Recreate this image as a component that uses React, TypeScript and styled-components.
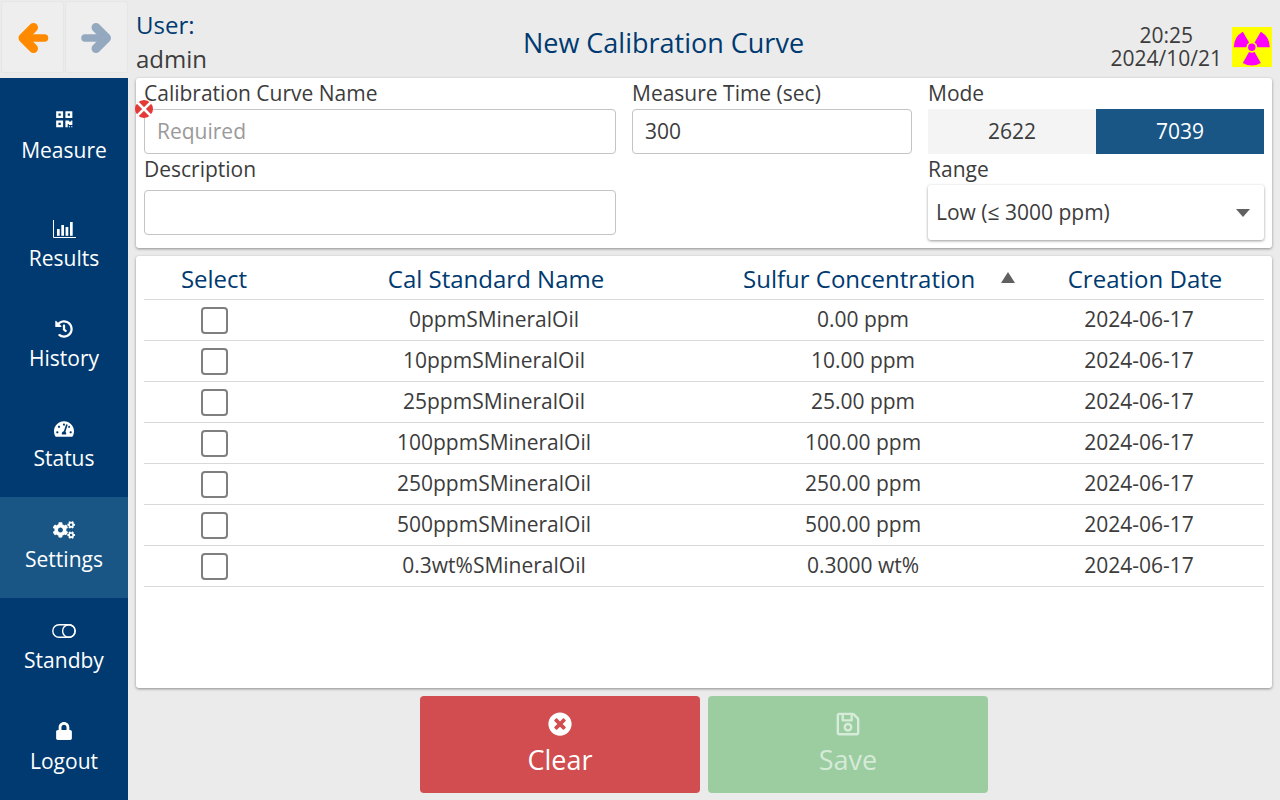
import React from "react";
import styled, { createGlobalStyle } from "styled-components";
import {
  FaQrcode,
  FaHistory,
  FaTachometerAlt,
  FaCogs,
  FaLock,
  FaTimesCircle,
  FaRegSave,
} from "react-icons/fa";

const Global = createGlobalStyle`
  html, body { margin: 0; padding: 0; }
  body { font-family: "Open Sans", "Liberation Sans", sans-serif; }
  * { box-sizing: border-box; }
`;

const Screen = styled.div`
  width: 1280px;
  height: 800px;
  overflow: hidden;
  background: #ebebeb;
  display: grid;
  grid-template-columns: 128px 1fr;
  grid-template-rows: 78px 722px;
  font-size: 21px;
  color: #3c3c3c;
`;

const NavButtons = styled.div`
  display: flex;
  gap: 1px;
  padding: 1px 0 5px 1px;
`;

const NavButton = styled.div`
  flex: 1 0 62px;
  display: flex;
  align-items: center;
  justify-content: center;
  background: #eeeeee;
  border: 1px solid #e6e6e6;
  border-radius: 3px;
`;

const Arrow = styled.svg<{ $color: string }>`
  width: 32px;
  height: 32px;
  display: block;
  fill: none;
  stroke: ${(p) => p.$color};
  stroke-linecap: round;
  stroke-linejoin: round;
`;

const Header = styled.header`
  display: grid;
  grid-template-columns: 1fr auto auto;
  align-items: center;
  padding: 0 8px;
  position: relative;
`;

const UserBlock = styled.div`
  display: flex;
  flex-direction: column;
  font-size: 24px;
  line-height: 34px;
  height: 78px;
  padding-top: 8px;
`;

const UserLabel = styled.span`
  color: #003a70;
`;

const Title = styled.h1`
  position: absolute;
  left: 0;
  width: 1071px;
  top: 24px;
  margin: 0;
  text-align: center;
  font-size: 27px;
  line-height: 38px;
  font-weight: 400;
  color: #003a70;
`;

const Clock = styled.div`
  text-align: center;
  line-height: 23px;
  margin-right: 10px;
  padding-top: 16px;
`;

const Hazard = styled.svg`
  width: 40px;
  height: 40px;
  margin-top: 16px;
  display: block;
`;

const Sidebar = styled.nav`
  background: #003a70;
  display: flex;
  flex-direction: column;
`;

const SideItem = styled.div<{ $active?: boolean; $height?: number; $pad?: number }>`
  height: ${(p) => p.$height ?? 100}px;
  flex: none;
  display: flex;
  flex-direction: column;
  align-items: center;
  justify-content: flex-end;
  padding-bottom: ${(p) => p.$pad ?? 24}px;
  background: ${(p) => (p.$active ? "#195686" : "transparent")};
  color: #fff;
`;

const SideIcon = styled.span<{ $size?: number; $gap?: number }>`
  height: 20px;
  font-size: ${(p) => p.$size ?? 18}px;
  line-height: 20px;
  display: flex;
  align-items: center;
  margin-bottom: ${(p) => p.$gap ?? 4}px;
`;

const SideLabel = styled.span`
  line-height: 30px;
`;

const Main = styled.main`
  padding: 0 8px 7px;
  display: flex;
  flex-direction: column;
  gap: 8px;
  min-height: 0;
`;

const Card = styled.section`
  background: #fff;
  border-radius: 3px;
  box-shadow: 0 1px 3px rgba(0, 0, 0, 0.4);
`;

const FormCard = styled(Card)`
  height: 170px;
  flex: none;
  padding: 0 8px;
  display: grid;
  grid-template-columns: 472px 280px 336px;
  column-gap: 16px;
  position: relative;
`;

const Column = styled.div`
  display: flex;
  flex-direction: column;
`;

const Label = styled.label`
  line-height: 30px;
  height: 31px;
  white-space: nowrap;
`;

const LowerLabel = styled(Label)`
  height: 36px;
  line-height: 30px;
`;

const TextInput = styled.div<{ $placeholder?: boolean }>`
  height: 45px;
  border: 1px solid #c4c4c4;
  border-radius: 4px;
  padding: 0 12px;
  line-height: 42px;
  color: ${(p) => (p.$placeholder ? "#9a9a9a" : "#3c3c3c")};
`;

const ErrorBadge = styled.svg`
  position: absolute;
  left: -1px;
  top: 22px;
  width: 18px;
  height: 18px;
  display: block;
`;

const Segments = styled.div`
  display: grid;
  grid-template-columns: 1fr 1fr;
  height: 45px;
`;

const Segment = styled.div<{ $on?: boolean }>`
  display: flex;
  align-items: center;
  justify-content: center;
  padding-bottom: 2px;
  background: ${(p) => (p.$on ? "#195686" : "#f4f4f4")};
  color: ${(p) => (p.$on ? "#fff" : "#3c3c3c")};
`;

const Select = styled.div`
  height: 55px;
  border-radius: 3px;
  box-shadow: 0 1px 3px rgba(0, 0, 0, 0.4);
  padding: 0 14px 2px 8px;
  display: flex;
  align-items: center;
  justify-content: space-between;
  background: #fff;
`;

const Caret = styled.svg`
  width: 14px;
  height: 8px;
  display: block;
  fill: #606060;
  margin-top: 2px;
`;

const TableCard = styled(Card)`
  flex: 1;
  padding: 0 8px;
`;

const Row = styled.div`
  display: grid;
  grid-template-columns: 141px 422px 319px 238px;
  height: 41px;
  align-items: center;
  border-bottom: 1px solid #d9d9d9;
  text-align: center;
`;

const HeadRow = styled(Row)`
  height: 44px;
  padding-top: 2px;
  font-size: 24px;
  color: #003a70;
`;

const Cell = styled.div<{ $shift?: number }>`
  white-space: nowrap;
  padding-right: ${(p) => p.$shift ?? 0}px;
`;

const TextCell = styled(Cell)`
  padding-bottom: 2px;
`;

const SortHead = styled.div`
  display: flex;
  align-items: center;
  gap: 26px;
  padding-left: 36px;
  white-space: nowrap;
`;

const Sort = styled.svg`
  width: 14px;
  height: 11px;
  display: block;
  fill: #606060;
  margin-top: -2px;
`;

const Check = styled.span`
  display: block;
  width: 27px;
  height: 27px;
  margin: 0 auto;
  border: 2px solid #7f7f7f;
  border-radius: 4px;
  background: #fff;
`;

const Actions = styled.div`
  display: flex;
  justify-content: center;
  gap: 8px;
  height: 97px;
  flex: none;
`;

const ActionButton = styled.button<{ $bg: string; $dim?: boolean }>`
  width: 280px;
  border: 0;
  border-radius: 4px;
  background: ${(p) => p.$bg};
  color: ${(p) => (p.$dim ? "rgba(255,255,255,0.6)" : "#fff")};
  font: inherit;
  font-size: 27px;
  display: flex;
  flex-direction: column;
  align-items: center;
  padding: 16px 0 0;
`;

const ActionIcon = styled.span<{ $size?: number }>`
  font-size: ${(p) => p.$size ?? 24}px;
  height: 24px;
  line-height: 24px;
  display: flex;
  align-items: center;
  margin-bottom: 5px;
`;

const StandbyIcon = () => (
  <svg width="24" height="14" viewBox="0 0 24 14" fill="none" stroke="#fff" strokeWidth="1.4">
    <rect x="0.8" y="0.8" width="22.4" height="12.4" rx="6.2" />
    <circle cx="16.8" cy="7" r="6.2" />
  </svg>
);

const ChartIcon = () => (
  <svg width="23" height="18" viewBox="0 0 23 18" fill="#fff">
    <path d="M.5 0V17.5H23" fill="none" stroke="#fff" strokeWidth="1" />
    <rect x="4" y="9" width="2.7" height="6.8" />
    <rect x="8.3" y="5" width="2.7" height="10.8" />
    <rect x="12.6" y="7" width="2.7" height="8.8" />
    <rect x="17" y="2" width="2.7" height="13.8" />
  </svg>
);

const rows = [
  ["0ppmSMineralOil", "0.00 ppm"],
  ["10ppmSMineralOil", "10.00 ppm"],
  ["25ppmSMineralOil", "25.00 ppm"],
  ["100ppmSMineralOil", "100.00 ppm"],
  ["250ppmSMineralOil", "250.00 ppm"],
  ["500ppmSMineralOil", "500.00 ppm"],
  ["0.3wt%SMineralOil", "0.3000 wt%"],
];

const blade = "M17.25 24.76 L11 35.59 A18 18 0 0 0 29 35.59 L22.75 24.76 A5.5 5.5 0 0 1 17.25 24.76 Z";

export default function App() {
  return (
    <Screen>
      <Global />
      <NavButtons>
        <NavButton>
          <Arrow $color="#ff8a00" viewBox="0 0 32 32">
            <path d="M6 17L16.5 6.5M6 17L16.5 27.5" strokeWidth="9" />
            <path d="M8 17H27.5" strokeWidth="7.5" />
          </Arrow>
        </NavButton>
        <NavButton>
          <Arrow $color="#94a9c0" viewBox="0 0 32 32">
            <path d="M25.5 17L15 6.5M25.5 17L15 27.5" strokeWidth="9" />
            <path d="M4 17H23" strokeWidth="7.5" />
          </Arrow>
        </NavButton>
      </NavButtons>
      <Header>
        <UserBlock>
          <UserLabel>User:</UserLabel>
          <span>admin</span>
        </UserBlock>
        <Title>New Calibration Curve</Title>
        <Clock>
          20:25
          <br />
          2024/10/21
        </Clock>
        <Hazard viewBox="0 0 40 40">
          <rect width="40" height="40" fill="#ffff00" />
          <g fill="#ff00ff" transform="translate(-0.2 0.3)">
            <path d={blade} />
            <path d={blade} transform="rotate(120 20 20)" />
            <path d={blade} transform="rotate(-120 20 20)" />
            <circle cx="20" cy="20" r="3.7" />
          </g>
        </Hazard>
      </Header>
      <Sidebar>
        <SideItem $height={119} $pad={32}>
          <SideIcon $size={18.5} $gap={6}><FaQrcode /></SideIcon>
          <SideLabel>Measure</SideLabel>
        </SideItem>
        <SideItem>
          <SideIcon><ChartIcon /></SideIcon>
          <SideLabel>Results</SideLabel>
        </SideItem>
        <SideItem>
          <SideIcon $size={18}><FaHistory /></SideIcon>
          <SideLabel>History</SideLabel>
        </SideItem>
        <SideItem>
          <SideIcon $size={20}><FaTachometerAlt /></SideIcon>
          <SideLabel>Status</SideLabel>
        </SideItem>
        <SideItem $active $height={101}>
          <SideIcon $size={22}><FaCogs /></SideIcon>
          <SideLabel>Settings</SideLabel>
        </SideItem>
        <SideItem $height={101}>
          <SideIcon><StandbyIcon /></SideIcon>
          <SideLabel>Standby</SideLabel>
        </SideItem>
        <SideItem $height={101} $pad={24}>
          <SideIcon $size={18} $gap={5}><FaLock /></SideIcon>
          <SideLabel>Logout</SideLabel>
        </SideItem>
      </Sidebar>
      <Main>
        <FormCard>
          <ErrorBadge viewBox="0 0 18 18">
            <circle cx="9" cy="9" r="9" fill="#e53935" />
            <path d="M3.5 3.5L14.5 14.5M14.5 3.5L3.5 14.5" stroke="#fff" strokeWidth="2.6" strokeLinecap="square" />
          </ErrorBadge>
          <Column>
            <Label>Calibration Curve Name</Label>
            <TextInput $placeholder>Required</TextInput>
            <LowerLabel>Description</LowerLabel>
            <TextInput />
          </Column>
          <Column>
            <Label>Measure Time (sec)</Label>
            <TextInput>300</TextInput>
          </Column>
          <Column>
            <Label>Mode</Label>
            <Segments>
              <Segment>2622</Segment>
              <Segment $on>7039</Segment>
            </Segments>
            <Label>Range</Label>
            <Select>
              <span>Low (≤ 3000 ppm)</span>
              <Caret viewBox="0 0 16 9" preserveAspectRatio="none"><path d="M0 0H16L8 9Z" /></Caret>
            </Select>
          </Column>
        </FormCard>
        <TableCard>
          <HeadRow>
            <Cell $shift={1}>Select</Cell>
            <Cell>Cal Standard Name</Cell>
            <SortHead>
              Sulfur Concentration
              <Sort viewBox="0 0 16 12" preserveAspectRatio="none"><path d="M8 0L16 12H0Z" /></Sort>
            </SortHead>
            <Cell>Creation Date</Cell>
          </HeadRow>
          {rows.map(([name, conc]) => (
            <Row key={name}>
              <Cell><Check /></Cell>
              <TextCell $shift={4}>{name}</TextCell>
              <TextCell $shift={7}>{conc}</TextCell>
              <TextCell $shift={12}>2024-06-17</TextCell>
            </Row>
          ))}
        </TableCard>
        <Actions>
          <ActionButton $bg="#d14d4f">
            <ActionIcon><FaTimesCircle /></ActionIcon>
            Clear
          </ActionButton>
          <ActionButton $bg="#9bcda1" $dim>
            <ActionIcon $size={26}><FaRegSave /></ActionIcon>
            Save
          </ActionButton>
        </Actions>
      </Main>
    </Screen>
  );
}
